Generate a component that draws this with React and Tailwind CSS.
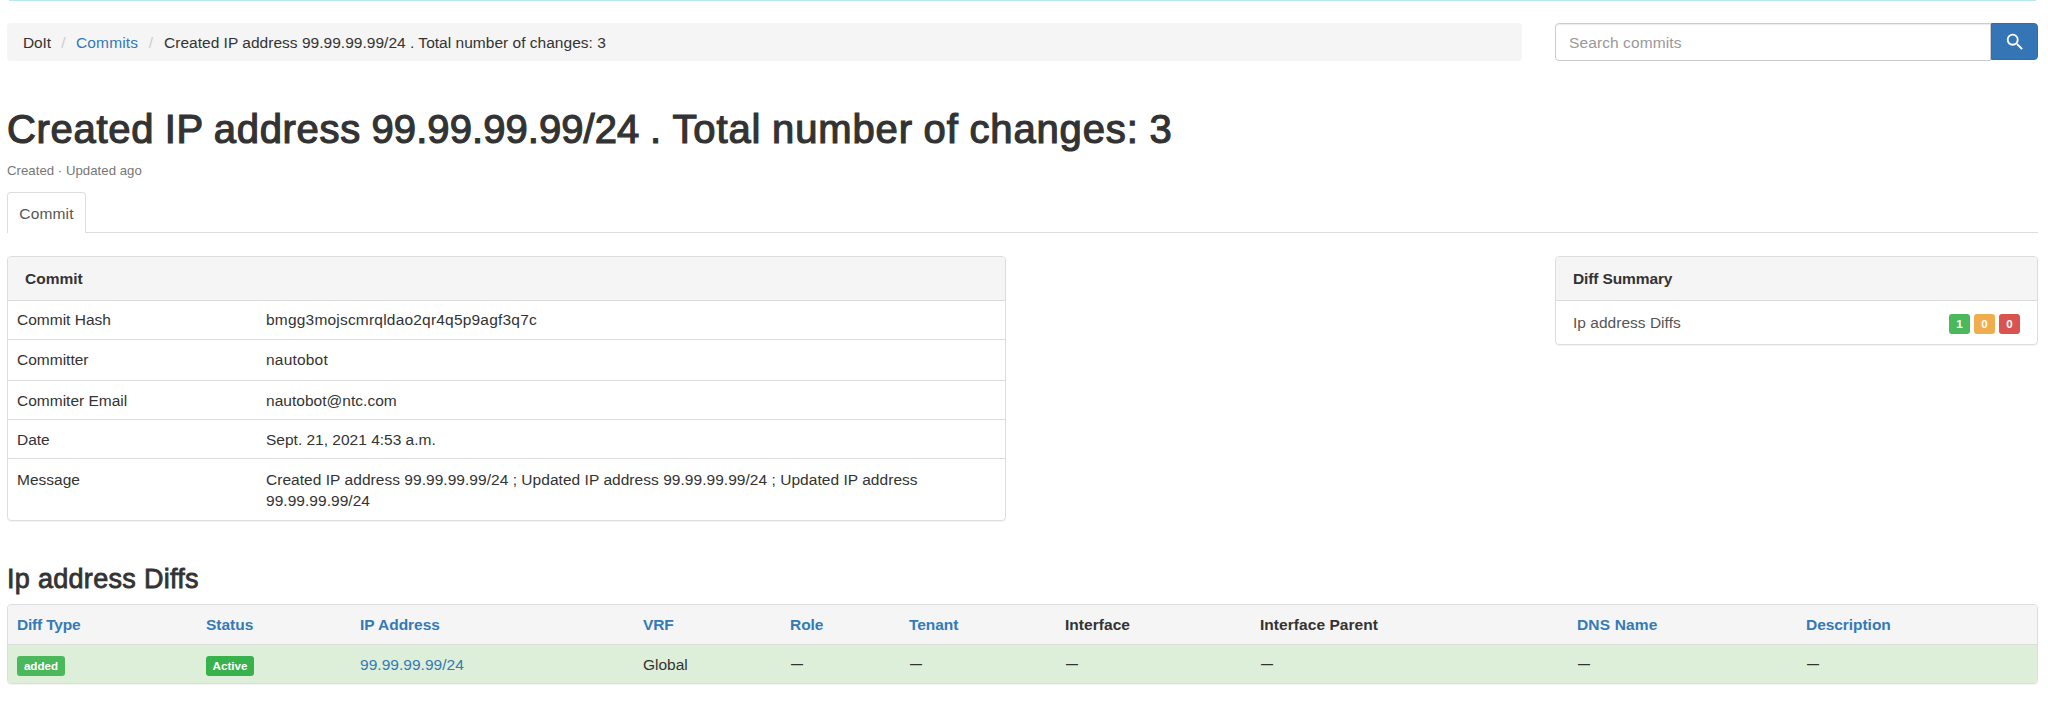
import React from "react";

const commitRows = [
  ["Commit Hash", "bmgg3mojscmrqldao2qr4q5p9agf3q7c", "h-[39px] pt-[8px]", "tracking-[0.2px]"],
  ["Committer", "nautobot", "h-[41px] pt-[9px]", "tracking-[0.2px]"],
  ["Commiter Email", "nautobot@ntc.com", "h-[39px] pt-[9px]", "tracking-[0.03px]"],
  ["Date", "Sept. 21, 2021 4:53 a.m.", "h-[39px] pt-[9px]", "tracking-[0px]"],
  [
    "Message",
    "Created IP address 99.99.99.99/24 ; Updated IP address 99.99.99.99/24 ; Updated IP address 99.99.99.99/24",
    "h-[62px] pt-[10px]",
    "tracking-[0.04px]",
  ],
];

const columns = [
  ["Diff Type", "text-[#337ab7] tracking-[-0.2px]"],
  ["Status", "text-[#337ab7]"],
  ["IP Address", "text-[#337ab7] tracking-[-0.02px]"],
  ["VRF", "text-[#337ab7] tracking-[-0.15px]"],
  ["Role", "text-[#337ab7] tracking-[-0.05px]"],
  ["Tenant", "text-[#337ab7] tracking-[-0.05px]"],
  ["Interface", "tracking-[0.04px]"],
  ["Interface Parent", "tracking-[0.05px]"],
  ["DNS Name", "text-[#337ab7] tracking-[0.15px]"],
  ["Description", "text-[#337ab7] tracking-[-0.05px]"],
];

const gridCols =
  "grid grid-cols-[189px_154px_283px_147px_119px_156px_195px_317px_229px_1fr] pl-[9px]";

function Badge({ className, children }) {
  return (
    <span
      className={`inline-flex h-5 items-center justify-center rounded-[3px] text-[11.6px] font-bold leading-none text-white ${className}`}
    >
      {children}
    </span>
  );
}

function Breadcrumb() {
  return (
    <nav className="flex h-[38px] w-[1515px] items-center rounded bg-[#f5f5f5] pl-4 pt-px">
      <span className="w-7 tracking-[-0.1px]">DoIt</span>
      <span className="w-[25px] text-center text-[#ccc]">/</span>
      <a className="w-[62px] text-[#337ab7] tracking-[0.15px]">Commits</a>
      <span className="w-[26px] text-center text-[#ccc]">/</span>
      <span className="tracking-[0.02px]">Created IP address 99.99.99.99/24 . Total number of changes: 3</span>
    </nav>
  );
}

function Search() {
  return (
    <div className="flex h-[38px] w-[483px] items-start">
      <div className="flex h-[38px] flex-1 items-center rounded-l border border-[#ccc] pl-[13px] pt-px text-[#999] shadow-[inset_0_1px_1px_rgba(0,0,0,0.075)] tracking-[0.1px]">
        Search commits
      </div>
      <button className="flex h-[37px] w-[47px] items-center justify-center rounded-r border border-[#2f70ab] bg-[#3475b5]">
        <svg viewBox="0 0 24 24" className="h-[22px] w-[22px]" fill="white">
          <path d="M9.5,3A6.5,6.5 0 0,1 16,9.5C16,11.11 15.41,12.59 14.44,13.73L14.71,14H15.5L20.5,19L19,20.5L14,15.5V14.71L13.73,14.44C12.59,15.41 11.11,16 9.5,16A6.5,6.5 0 0,1 3,9.5A6.5,6.5 0 0,1 9.5,3M9.5,5C7,5 5,7 5,9.5C5,12 7,14 9.5,14C12,14 14,12 14,9.5C14,7 12,5 9.5,5Z" />
        </svg>
      </button>
    </div>
  );
}

export default function App() {
  return (
    <div className="h-[702px] w-[2048px] overflow-hidden bg-white pl-[7px] pr-[10px] font-['Liberation_Sans',Arial,sans-serif] text-[15.5px] leading-[21px] text-[#333]">
      <div className="mx-0.5 h-px bg-[#b8e6f1]" />
      <div className="mt-[22px] flex justify-between">
        <Breadcrumb />
        <Search />
      </div>

      <h1 className="mt-[46px] h-[44px] whitespace-nowrap text-[40px] font-normal leading-[44px] tracking-[0.69px] [word-spacing:-1.2px] [-webkit-text-stroke:1.2px_#333]">
        Created IP address <span className="tracking-[0.07px]">99.99.99.99/24</span> .{" "}
        <span className="tracking-[0.86px]">Total number of changes: 3</span>
      </h1>
      <p className="mt-[11px] h-[18px] text-[13.2px] leading-[18px] tracking-[0.03px] text-[#777]">Created · Updated ago</p>

      <div className="mt-[12px] flex h-[41px] border-b border-[#ddd]">
        <div className="-mb-px flex h-[41px] w-[79px] items-center justify-center rounded-t border border-b-0 border-[#ddd] bg-white text-[#555] tracking-[0.15px]">
          Commit
        </div>
      </div>

      <div className="mt-[23px] flex items-start justify-between">
        <section className="w-[999px] rounded border border-[#ddd] shadow-[0_1px_1px_rgba(0,0,0,0.05)]">
          <h2 className="flex h-[43px] items-center rounded-t-[3px] bg-[#f5f5f5] pl-[17px] font-bold">Commit</h2>
          {commitRows.map(([label, value, size, tracking]) => (
            <div key={label} className={`flex border-t border-[#ddd] pl-[9px] ${size}`}>
              <div className="w-[249px] shrink-0">{label}</div>
              <div className={`w-[680px] ${tracking}`}>{value}</div>
            </div>
          ))}
        </section>

        <section className="w-[483px] rounded border border-[#ddd] shadow-[0_1px_1px_rgba(0,0,0,0.05)]">
          <h2 className="flex h-[43px] items-center rounded-t-[3px] bg-[#f5f5f5] pl-[17px] font-bold tracking-[-0.12px]">Diff Summary</h2>
          <div className="flex h-[44px] items-center border-t border-[#ddd] pl-[17px] pr-[17px] text-[#555]">
            <span className="flex-1 tracking-[0.02px]">Ip address Diffs</span>
            <span className="flex gap-1 pt-0.5">
              <Badge className="w-[21px] bg-[#4cb85c]">1</Badge>
              <Badge className="w-[21px] bg-[#f0ad4e]">0</Badge>
              <Badge className="w-[21px] bg-[#d9534f]">0</Badge>
            </span>
          </div>
        </section>
      </div>

      <h3 className="mt-[43px] h-[30px] whitespace-nowrap text-[27px] font-normal leading-[30px] tracking-[0.3px] [-webkit-text-stroke:0.8px_#333]">
        Ip address Diffs
      </h3>

      <section className="mt-[10px] rounded border border-[#ddd] shadow-[0_1px_1px_rgba(0,0,0,0.05)]">
        <div className={`h-[39px] items-center rounded-t-[3px] bg-[#f5f5f5] font-bold ${gridCols}`}>
          {columns.map(([name, style]) => (
            <span key={name} className={style}>
              {name}
            </span>
          ))}
        </div>
        <div className={`h-[39px] items-center rounded-b-[3px] border-t border-[#ddd] bg-[#ddefd9] ${gridCols}`}>
          <span className="flex pt-[3px]">
            <Badge className="w-12 bg-[#4cb85c]">added</Badge>
          </span>
          <span className="flex pt-[3px]">
            <Badge className="w-12 bg-[#37b24d]">Active</Badge>
          </span>
          <a className="text-[#337ab7] tracking-[0.03px]">99.99.99.99/24</a>
          <span>Global</span>
          {[0, 1, 2, 3, 4, 5].map((i) => (
            <span key={i} className="pl-px text-[12px] font-bold">
              —
            </span>
          ))}
        </div>
      </section>
    </div>
  );
}
